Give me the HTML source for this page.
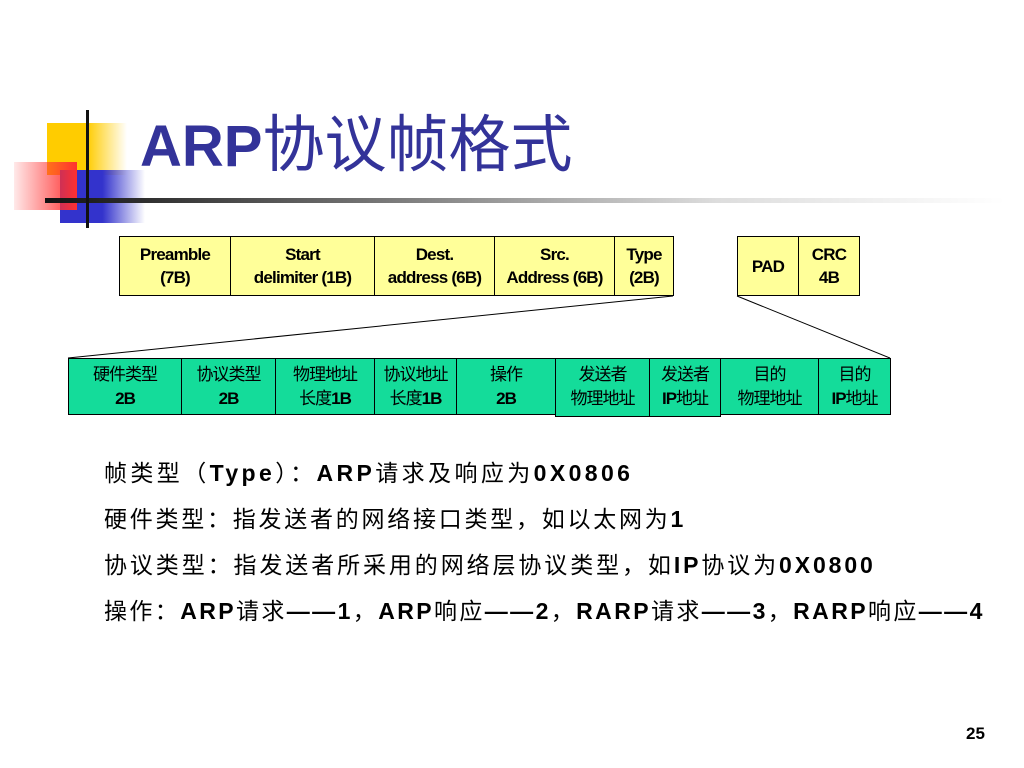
<!DOCTYPE html>
<html><head><meta charset="utf-8"><style>
body{margin:0;width:1024px;height:768px;background:#fff;position:relative;overflow:hidden;font-family:"Liberation Sans","Noto Sans CJK SC",sans-serif}
.a{position:absolute}
.y{position:absolute;background:#ffff99;border:1px solid #000;box-sizing:border-box;font:bold 17px "Liberation Sans",sans-serif;text-align:center;line-height:23px;padding-top:6px;white-space:nowrap;letter-spacing:-0.8px}
.g{position:absolute;background:#14dc9a;border:1px solid #000;box-sizing:border-box;font:17px "Liberation Sans","Noto Sans CJK SC",sans-serif;text-align:center;line-height:24px;padding-top:4px;white-space:nowrap;letter-spacing:-1px}
.t{position:absolute;left:104px;font-size:23px;letter-spacing:3px;white-space:nowrap;color:#000}
b{font-weight:bold}
</style></head><body>
<div class="a" style="left:47px;top:123px;width:80px;height:52px;background:linear-gradient(90deg,#ffcc00 0,#ffcc00 50%,rgba(255,204,0,0) 100%)"></div>
<div class="a" style="left:60px;top:170px;width:85px;height:53px;background:linear-gradient(90deg,#3333cc 0,#3333cc 50%,rgba(51,51,204,0) 100%)"></div>
<div class="a" style="left:14px;top:162px;width:63px;height:48px;background:linear-gradient(90deg,rgba(255,40,40,0.1) 0,#ff3030 100%)"></div>
<div class="a" style="left:45px;top:198px;width:960px;height:5px;background:linear-gradient(90deg,#111 0,#777 35%,#ddd 70%,rgba(255,255,255,0) 100%)"></div>
<div class="a" style="left:86px;top:110px;width:3px;height:118px;background:#111"></div>
<div class="a" style="left:140px;top:109px;font-size:62px;color:#333399;white-space:nowrap;line-height:74px"><b style="font-size:58px">ARP</b>协议帧格式</div>

<div class="y" style="left:119px;top:236px;width:112px;height:60px">Preamble<br>(7B)</div>
<div class="y" style="left:230px;top:236px;width:145px;height:60px">Start<br>delimiter (1B)</div>
<div class="y" style="left:374px;top:236px;width:121px;height:60px">Dest.<br>address (6B)</div>
<div class="y" style="left:494px;top:236px;width:121px;height:60px">Src.<br>Address (6B)</div>
<div class="y" style="left:614px;top:236px;width:60px;height:60px">Type<br>(2B)</div>
<div class="y" style="left:737px;top:236px;width:62px;height:60px;padding-top:18px">PAD</div>
<div class="y" style="left:798px;top:236px;width:62px;height:60px">CRC<br>4B</div>

<svg class="a" style="left:0;top:0" width="1024" height="768"><line x1="673" y1="296" x2="68" y2="358" stroke="#000"/><line x1="737" y1="296" x2="890" y2="358" stroke="#000"/></svg>

<div class="g" style="left:68px;top:358px;width:114px;height:57px">硬件类型<br><b>2B</b></div>
<div class="g" style="left:181px;top:358px;width:95px;height:57px">协议类型<br><b>2B</b></div>
<div class="g" style="left:275px;top:358px;width:100px;height:57px">物理地址<br>长度<b>1B</b></div>
<div class="g" style="left:374px;top:358px;width:83px;height:57px">协议地址<br>长度<b>1B</b></div>
<div class="g" style="left:456px;top:358px;width:100px;height:57px">操作<br><b>2B</b></div>
<div class="g" style="left:555px;top:358px;width:95px;height:59px">发送者<br>物理地址</div>
<div class="g" style="left:649px;top:358px;width:72px;height:59px">发送者<br><b>IP</b>地址</div>
<div class="g" style="left:720px;top:358px;width:99px;height:57px">目的<br>物理地址</div>
<div class="g" style="left:818px;top:358px;width:73px;height:57px">目的<br><b>IP</b>地址</div>

<div class="t" style="top:454px;letter-spacing:3.4px">帧类型（<b>Type</b>）：<b>ARP</b>请求及响应为<b>0X0806</b></div>
<div class="t" style="top:500px;letter-spacing:2.75px">硬件类型：指发送者的网络接口类型，如以太网为<b>1</b></div>
<div class="t" style="top:546px;letter-spacing:2.9px">协议类型：指发送者所采用的网络层协议类型，如<b>IP</b>协议为<b>0X0800</b></div>
<div class="t" style="top:592px;letter-spacing:2.4px">操作：<b>ARP</b>请求<b>——1</b>，<b>ARP</b>响应<b>——2</b>，<b>RARP</b>请求<b>——3</b>，<b>RARP</b>响应<b>——4</b></div>
<div class="a" style="left:966px;top:724px;font-size:17px;font-weight:bold">25</div>
</body></html>
